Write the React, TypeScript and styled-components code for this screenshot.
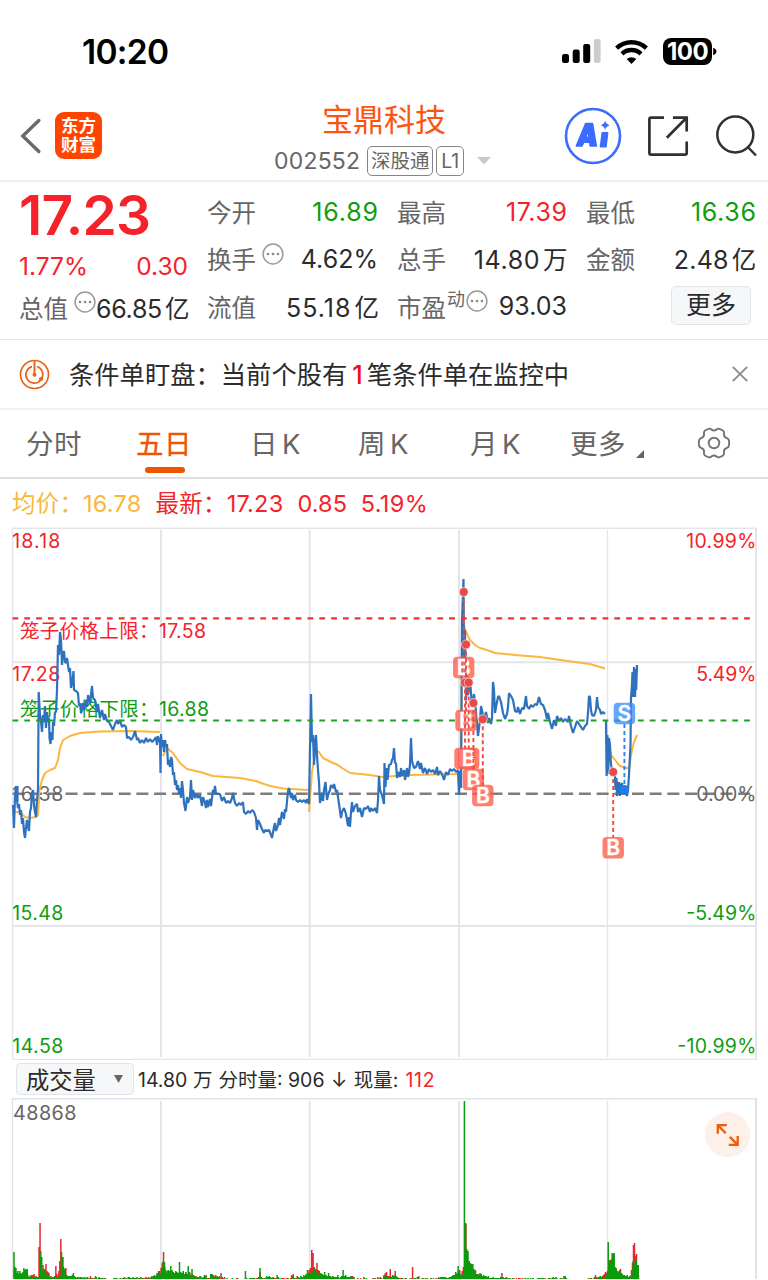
import React from "react";
import styled, { createGlobalStyle } from "styled-components";

const RED = "#f5222a";
const GREEN = "#0f9d0f";
const ORANGE = "#ee5500";
const INK = "#2b2b2b";
const GREY = "#666666";

const Global = createGlobalStyle`
  html, body { margin: 0; padding: 0; background: #fff; }
  body { width: 768px; height: 1280px; overflow: hidden; }
  * { box-sizing: border-box; }
`;

const Screen = styled.main`
  width: 768px;
  height: 1280px;
  overflow: hidden;
  display: flex;
  flex-direction: column;
  background: #fff;
  color: ${INK};
  font-family: Inter, "Noto Sans CJK SC", sans-serif;
  font-weight: 400;
  white-space: nowrap;
`;

const StatusBar = styled.header`
  height: 92px;
  flex: none;
  display: flex;
  justify-content: space-between;
  align-items: center;
  padding: 11px 51px 0 82px;
`;

const Clock = styled.span`
  font-size: 33.5px;
  font-weight: 600;
  color: #000;
  letter-spacing: -0.7px;
`;

const StatusIcons = styled.div`
  display: flex;
  align-items: center;
`;

const Battery = styled.span`
  width: 49px;
  height: 27px;
  margin-left: 15px;
  border-radius: 8px;
  background: #000;
  color: #fff;
  font-size: 24px;
  font-weight: 700;
  line-height: 27px;
  letter-spacing: -0.5px;
  text-align: center;
`;

const TitleBar = styled.div`
  height: 90px;
  flex: none;
  display: flex;
  align-items: flex-start;
  border-bottom: 2px solid #efeff1;
`;

const BackIcon = styled.svg`
  margin: 26px 0 0 20px;
  flex: none;
`;

const AppLogo = styled.div`
  width: 47px;
  height: 47px;
  margin: 20px 0 0 14px;
  border-radius: 9px;
  background: #ff4400;
  color: #fff;
  font-size: 17.5px;
  font-weight: 700;
  line-height: 19px;
  text-align: center;
  padding-top: 4px;
`;

const TitleBlock = styled.div`
  width: 218px;
  margin-left: 172px;
  display: flex;
  flex-direction: column;
`;

const StockName = styled.h1`
  margin: 6px 0 0 48px;
  font-size: 31px;
  line-height: 44px;
  font-weight: 400;
  color: #fb560f;
`;

const CodeRow = styled.div`
  display: flex;
  align-items: center;
  height: 34px;
  margin-top: 2px;
  font-size: 23px;
  letter-spacing: 0.2px;
  color: ${GREY};
`;

const Tag = styled.span<{ $w: number; $gap: number }>`
  width: ${(p) => p.$w}px;
  height: 30px;
  margin-left: ${(p) => p.$gap}px;
  border: 1.5px solid #858585;
  border-radius: 5px;
  font-size: 19.5px;
  line-height: 28px;
  letter-spacing: 0;
  text-align: center;
`;

const Caret = styled.svg`
  margin-left: 13px;
  flex: none;
`;

const HeaderIcons = styled.div`
  display: flex;
  align-items: center;
  margin: 15px 0 0 72px;
`;

const Quote = styled.section`
  height: 158px;
  flex: none;
  display: grid;
  grid-template-columns: 169px 171px 170px 170px;
  column-gap: 19px;
  padding: 6px 0 0 19px;
  border-bottom: 1.5px solid #e8e8ea;
`;

const QuoteColumn = styled.div`
  display: grid;
  grid-template-columns: 100%;
  grid-template-rows: 47px 47px 48px;
`;

const PriceColumn = styled(QuoteColumn)`
  grid-template-rows: 56px 44px 38px;
`;

const Price = styled.div`
  font-size: 55px;
  line-height: 54px;
  font-weight: 600;
  letter-spacing: -0.7px;
  color: ${RED};
`;

const Field = styled.div`
  display: flex;
  align-items: center;
  justify-content: space-between;
`;

const ChangeRow = styled.div`
  display: flex;
  align-items: center;
  justify-content: space-between;
  font-size: 24.5px;
  color: ${RED};
`;

const Label = styled.span`
  display: flex;
  align-items: center;
  font-size: 24.5px;
  color: ${GREY};
`;

const Value = styled.span<{ $color?: string; $ls?: number }>`
  font-size: 25px;
  letter-spacing: ${(p) => p.$ls ?? 0}px;
  margin-right: ${(p) => -Math.max(p.$ls ?? 0, 0)}px;
  color: ${(p) => p.$color ?? INK};
`;

const Unit = styled.span`
  font-size: 24.5px;
  letter-spacing: 0;
  margin: 0 0 0 3px;
`;

const Super = styled.sup`
  font-size: 18px;
  line-height: 18px;
  margin: -13px 0 0 1px;
  vertical-align: baseline;
`;

const DotsIcon = styled.svg<{ $gap: number }>`
  margin: -10px 0 0 ${(p) => p.$gap}px;
  flex: none;
`;

const MoreButton = styled.button`
  width: 80px;
  height: 39px;
  margin: -2px 5px 0 auto;
  padding: 0;
  border: 1.5px solid #e1e4e8;
  border-radius: 5px;
  background: #f6f7f9;
  color: ${INK};
  font: 400 25px/36px Inter, "Noto Sans CJK SC", sans-serif;
`;

const Notice = styled.section`
  height: 70px;
  flex: none;
  display: flex;
  align-items: center;
  padding: 0 19px 0 19px;
  border-bottom: 2px solid #f0f0f2;
`;

const NoticeText = styled.p`
  flex: 1;
  margin: -2px 0 0 19px;
  font-size: 25.3px;
  b {
    color: #ee1111;
    font-weight: 500;
    margin: 0 4px 0 5px;
  }
`;

const Tabs = styled.nav`
  height: 69px;
  flex: none;
  display: grid;
  grid-template-columns: 110px 114px 108px 112px 100px 127px 34px;
  align-items: center;
  padding: 0 0 0 26px;
  border-bottom: 2px solid #dedee0;
`;

const Tab = styled.span<{ $active?: boolean }>`
  position: relative;
  width: max-content;
  font-size: 27.5px;
  line-height: 67px;
  padding-top: 1px;
  letter-spacing: 0.4px;
  word-spacing: -4px;
  color: ${(p) => (p.$active ? ORANGE : GREY)};
  -webkit-text-stroke: ${(p) => (p.$active ? 0.3 : 0)}px ${ORANGE};
  &::after {
    content: "";
    display: ${(p) => (p.$active ? "block" : "none")};
    position: absolute;
    left: 9px;
    bottom: 5px;
    width: 40px;
    height: 6px;
    border-radius: 3px;
    background: ${ORANGE};
  }
`;

const TabCorner = styled.svg`
  margin: 0 0 -4px 10px;
`;

const GearIcon = styled.svg`
  margin-top: -2px;
`;

const Legend = styled.div`
  height: 48px;
  flex: none;
  display: flex;
  align-items: baseline;
  padding: 7px 0 0 12px;
  line-height: 36px;
  font-size: 23.5px;
`;

const LegendItem = styled.span<{ $color: string; $gap: number; $ls?: number }>`
  color: ${(p) => p.$color};
  margin-right: ${(p) => p.$gap}px;
  letter-spacing: ${(p) => p.$ls ?? 0}px;
`;

const Plot = styled.svg`
  display: block;
  flex: none;
`;

const VolumeBar = styled.div`
  height: 38px;
  flex: none;
  display: flex;
  align-items: center;
  padding-left: 16px;
  font-size: 19.5px;
`;

const Select = styled.div`
  width: 118px;
  height: 32px;
  display: flex;
  align-items: center;
  justify-content: space-between;
  padding: 0 10px 0 9px;
  border: 1.5px solid #e1e4e8;
  border-radius: 4px;
  background: #f6f7f9;
  font-size: 23.3px;
`;

const VolumeInfo = styled.div`
  display: flex;
  align-items: baseline;
  margin: -2px 0 0 4px;
`;

const VolumeText = styled.span<{ $gap: number; $color?: string; $ls?: number }>`
  margin-left: ${(p) => p.$gap}px;
  letter-spacing: ${(p) => p.$ls ?? 0}px;
  color: ${(p) => p.$color ?? INK};
`;

function Dots({ gap }: { gap: number }) {
  return (
    <DotsIcon $gap={gap} width="22" height="22" viewBox="0 0 22 22">
      <circle cx="11" cy="11" r="9.9" fill="none" stroke="#999" strokeWidth="1.5" />
      <g fill="#888">
        <circle cx="6" cy="11" r="1.35" />
        <circle cx="11" cy="11" r="1.35" />
        <circle cx="16" cy="11" r="1.35" />
      </g>
    </DotsIcon>
  );
}

const priceDays = [
  "13,805 14,828 15,796 16,786 17,800 18,808 19,804 20,815 21,810 22,824 23,818 24,832 25,838 26,828 27,820 28,826 29,831 30,812 31,808 32,793 33,790 34,805 35,812 36,817 37,800 38,790 38.7,692 40,715 41,722 42,732 43,715 44,722 45,706 46,728 47,712 48,722 49,718 49.5,738 50.5,744 51.5,732 52.5,740 53,722 54,726 55,712 56,712 57,690 58,645 59,655 60,632 61,640 62,665 63,653 64,651 65,662 66,663 67,658 69,672 70,668 71,688 72.5,680 73.5,671 74,690 76,691 78,693 79,706 80,703 81,713 83,703 84,710 86,700 87,707 88,695 90,703 92,686 93,698 95,700 97,712 98,704 100,718 102,710 104,720 105,714 107,721 109,722 111,726 113,730 115,724 117,720 118,724 120,720 122,727 124,725 126,727 127,738 129,737 131,740 133,737 135,731 137,740 138,738 140,743 142,740 144,743 146,738 148,742 150,739 152,742 154,740 156,737 157,745 158,736 159,742 160,738 160.5,773 161,734 162,747 163,740 164,752 165,740 166,747 167,744 168,765 169,760 170,767 171,757 172,760 173,775 174,772 175,785 176,780 177,790 178,785 179,794 180,788 181,798 182,781 183,790 184,803 185.5,811 187,797 188,803 190,797 191,780 192,800 193,790 195,798 197,794 198,798 200,795 202,806 203,797 205,803 206,808 207,800 208,807 210,799 211,806 213,790 214,793 215,786 216,794 218,794 220,794 222,801 224,797 226,803 228,801 230,803 232,798 233,793 235,803 237,806 239,803 241,805 243,802 244,812 246,814 248,811 250,813 252,810 254,812 256,818 257,830 258,820 260,824 262,829 264,833 265,830 267,831 269,830 271,835 272,838 274,827 275,823 276,831 278,825 279,818 280,825 282,812 284,819 285,809 286,812 288,791 289,788 291,798 292,793 293,800 295,795 296,800 298,802 300,800 302,802 304,800 306,803 307,799 309,804 311,694 312,742 313,735 314,765 315,743 316,735 317,755 318,770 319,782 320,803 321,797 322,793 323,801 324,790 325.5,782 327,800 328,795 330,790 331,785 333,788 334,784 336,792 337,790 339,804 341,818 342,812 344,808 346,814 348,826 349,817 350,827 351,812 352,802 353,812 355,806 357,804 358,812 360,808 362,817 364,808 366,809 368,806 370,812 371,808 373,811 375,808 377,813 378,800 379,776 380,790 382,795 384,804 384.5,763 385.5,787 386.5,768 387.5,780 389,765 391,764 392,760 393,758 394,748 395,763 396,763 397,778 398,772 400,777 401,768 402,776 404,770 405,780 407,768 408,777 409,773 410,765 411,738 412,761 414,768 416,767 418,761 420,769 421,763 423,773 425,768 427,774 429,769 431,772 433,770 435,774 437,767 438,775 440,771 442,774 444,780 446,772 448,775 450,769 452,771 454,769 456,772 458,770 459,795 460,771 461,788 462,620 463.5,579 464,660 465,630 466,700 467,670 468,695 470,680 472,706 474,694 476,712 478,736 480,720 481,706 483,715 484,720 486,712 488,723 489,718 491,724 492,718 493,682 494,690 495,713 496,707 498,697 499,696 501,702 503,713 505,719 507,714 508,707 509,693 511,696 513,700 515,711 517,712 518,707 520,714 522,708 524,709 526,696 527,706 529,709 531,705 533,707 535,704 537,705 539,697 541,704 543,705 545,710 547,719 548,713 550,722 552,729 554,720 556,726 557,716 559,721 561,718 563,722 565,719 568,722 569,716 571,726 573,733 575,727 577,721 579,724 581,727 583,730 585,726 587,724 588,713 589,696 590,697 591,710 592,715 594,716 596,710 597,697 598,707 600,710 601,714 603,712 605,714",
  "606,720 606.6,776 607.4,735 608.2,774 609,738 610,745 611,765 613,772 615,774 615.5,790 616.5,778 617,796 618,788 619,782 620,796 621,785 622,783 623,794 625,790 627,796 628,790 629,775 630.5,745 631,698 632,684 632.5,672 633.2,697 634,667 635,697 636,669 636.2,690 637,665",
];

const averageDays = [
  "13,812 20,812 25,817 30,818 36,817 38,815 39.5,790 42,780 45,773 50,770 55,768 58,760 60,748 63,740 70,736 80,733 100,731.5 130,731 160,732",
  "163,756 167,748 173,753 180,763 187,769 200,772 213,776 240,778 256,781 261,783 270,786 283,788.5 308,790",
  "309,812 312,772 316,750 319,752 323,758 333,763 338,765 342,768 350,773 370,775 382,777 395,776 410,775 458,774",
  "461,780 462,640 463,622 466,632 470,640 475,645 480,648 490,651 495,653 515,655 540,657 560,660 575,662 590,664 600,667 605,668.5",
  "607,740 611,755 615,760 620,766 626,768 629,768 632,750 634,742 637,735",
];

const buys = [
  { x: 463.7, dot: 592, box: 667.5 },
  { x: 466, dot: 644.5, box: 720.5 },
  { x: 465, dot: 682.5, box: 758.5 },
  { x: 468.7, dot: 682.5, box: 758.5 },
  { x: 473.4, dot: 703, box: 779.5 },
  { x: 482.8, dot: 719.3, box: 795.5 },
  { x: 613.2, dot: 772, box: 847.8 },
];

function Marker({ x, y, letter, color }: { x: number; y: number; letter: string; color: string }) {
  return (
    <g>
      <rect x={x - 10.7} y={y - 10.7} width="21.4" height="21.4" rx="4" fill={color} fillOpacity="0.78" />
      <text
        x={x}
        y={y + 7.4}
        fill="#fff"
        stroke="#fff"
        strokeWidth="0.3"
        fontSize="21"
        fontWeight="600"
        textAnchor="middle"
      >
        {letter}
      </text>
    </g>
  );
}

const axisLabels: [string, number, number, string, boolean][] = [
  ["18.18", 547.9, 48, RED, false],
  ["17.28", 680.5, 48, RED, false],
  ["16.38", 800.7, 51, GREY, false],
  ["15.48", 920, 51, GREEN, false],
  ["14.58", 1052.5, 51, GREEN, false],
  ["10.99%", 547.9, 70, RED, true],
  ["5.49%", 680.5, 60, RED, true],
  ["0.00%", 800.7, 60, GREY, true],
  ["-5.49%", 920, 70, GREEN, true],
  ["-10.99%", 1052.5, 79, GREEN, true],
];

function PriceChart() {
  return (
    <Plot width="768" height="533" viewBox="0 527 768 533" fontFamily='Inter, "Noto Sans CJK SC", sans-serif'>
      <g fill="none" stroke="#e4e5ea" strokeWidth="2">
        <path d="M161 530V1057M309.7 530V1057M459 530V1057" />
        <path d="M607.5 530V1057" strokeWidth="1.3" />
        <path d="M12.5 662.3H756M12.5 926H756" />
        <path d="M12.5 1059.5V528.3H756" strokeWidth="1.4" />
        <path d="M12.5 1059.4H756" strokeWidth="1.4" />
        <path d="M756 528V1060" />
      </g>
      <path d="M12.5 793.8H756" stroke="#7d7d7d" strokeWidth="2.4" strokeDasharray="12 5.7" />
      <g fontSize="19.5">
        {axisLabels.map(([text, y, w, color, right]) => (
          <text key={text} x={right ? 756.3 - w : 12.3} y={y} fill={color} textLength={w}>
            {text}
          </text>
        ))}
        <text x="20" y="637.5" fill={RED} textLength="186">笼子价格上限：17.58</text>
        <text x="20" y="716" fill={GREEN} textLength="189">笼子价格下限：16.88</text>
      </g>
      <g fill="none" stroke="#fbb63f" strokeWidth="2" strokeLinejoin="round">
        {averageDays.map((points) => (
          <polyline key={points} points={points} />
        ))}
      </g>
      <g fill="none" stroke="#2e71bd" strokeWidth="2.2" strokeLinejoin="bevel">
        {priceDays.map((points) => (
          <polyline key={points} points={points} />
        ))}
      </g>
      <path d="M12.5 618.3H754" stroke="#ee3338" strokeWidth="2.2" strokeDasharray="5.8 6" />
      <path d="M12.5 720.5H754" stroke="#1fa01f" strokeWidth="2.2" strokeDasharray="5.8 6" />
      {buys.map(({ x, dot, box }) => (
        <g key={`${x}-${box}`}>
          <path d={`M${x} ${dot}V${box - 10}`} stroke="#f2483c" strokeWidth="1.9" strokeDasharray="4 3" />
          <Marker x={x} y={box} letter="B" color="#ff5a48" />
          <circle cx={x} cy={dot} r="4.5" fill="#e84a48" stroke="#ffffff" strokeOpacity="0.6" strokeWidth="1" />
        </g>
      ))}
      <path d="M624.4 724V790" stroke="#2b82f5" strokeWidth="1.9" strokeDasharray="4 3" />
      <Marker x={624.4} y={713.5} letter="S" color="#3a8df6" />
      <circle cx="624.4" cy="789.7" r="4.7" fill="#1d7cf2" />
    </Plot>
  );
}

// Bar heights listed left to right; each run starts at x and advances by step.
const volumeRuns: { x: number; step: number; up: string; down: string }[] = [
  {
    x: 14,
    step: 0.99,
    down: "27 12 11 6 8 5 8 6 5 7 11 9 10 9 4 2 3 2 2 2 3 1 2 2 1 2 3 28 22 8 7 10 6 3 6 3 2 2 1 2 2 3 1 1 2 2 1 3 27 22 12 10 6 3 2 3 3 3 2 4 6 3 2 1 2 2 1 2 2 1 1 2 1 1 2 0 1 0 1 0 0 1 1 2 0 1",
    up: "8 5 2 3 4 3 2 3 3 4 2 5 3 10 2 1 2 4 4 4 5 2 3 2 2 32 56 10 6 14 10 9 15 8 7 6 2 3 1 1 2 3 13 5 3 8 18 40 20 22 8 6 11 4 3 2 2 1 3 3 2 2 1 1 1 2 1 1 2 0 1 2 1 0 2 0 1 3 0 1 0 1 3",
  },
  {
    x: 99,
    step: 1.25,
    down: "2 1 1 1 0 1 0 0 0 0 0 0 1 1 1 0 0 1 0",
    up: "0 1 0 0 1 0 0 0 0 0 0 0 0 0 1 0 0 1 0",
  },
  {
    x: 122,
    step: 1.25,
    down: "0 1 2 1 0 2 2 1 1 2 1 1 2 0 1 2 1 0 0 1 0 1 1 0 3 2 4 3 6 5 8 6 12 18 17 9 6 9 8 13 9 7 6 8 7 6 17 7 6 8 5 7 5 13 7 4 10 4 3 2 2 2 1 3 1 2 4 3 1 0 1 5 5 4 2 4 1 1 3 0 1",
    up: "1 0 0 1 0 1 1 0 0 1 0 1 0 1 1 0 1 1 1 2 1 2 1 2 2 3 3 2 4 8 5 11 16 27 12 5 8 5 7 4 3 6 4 5 5 4 7 4 5 3 5 6 4 5 6 3 5 4 2 3 1 1 3 1 1 2 1 4 1 1 1 3 2 1 3 2 3 2 1 6 2",
  },
  {
    x: 223,
    step: 1.32,
    down: "0 0 0 1 0 0 0 1 0 0 0 1 0 0 0 0 0 8 1 0 0 1 1 0 1 0 0 2 11 2 1 0 1 3 2 3 2 1 2 0 1 4 2 0 1 0 0 0 0 1 0 0 4 2 1 1 0 2 1 3 2 1 3 5 9 6 5 4 8 11 8 7 4 8 6 5 4 7 4 3 6 3 2 3 2 2 2 4 1 2 3 9 3 4 1 2 2 3 1 2",
    up: "1 2 0 0 0 0 0 0 0 0 1 0 0 0 0 0 0 0 0 0 1 0 0 1 0 1 1 0 7 0 0 1 1 2 0 1 0 0 2 1 1 0 1 0 0 1 1 0 1 1 0 1 3 5 1 1 3 2 1 2 1 4 2 5 5 9 11 29 26 12 10 16 9 5 4 5 4 3 3 3 2 3 1 3 2 1 2 2 1 2 3 2 1 2 2 1 2 3 3 2",
  },
  {
    x: 354,
    step: 1.24,
    down: "0 0 0 1 0 0 0 0 2 0 1 0 0 0 0 0 1 0 0 1 0 1 0 0 3 2 3 1 2 1 2 3 1 4 3 1 1 0 0 1 0 0 1 0 0 0 1 0 0 1 0 2 1 0 0 1 0 0 1 0 0 0 1 0 1 0 0 0 1 1 2 2 2 1 2 1 1 2 2 3 4 4 7 5 13 7 5 4 3",
    up: "0 0 0 0 0 1 0 0 1 0 0 0 0 0 0 1 0 1 0 2 0 2 1 0 4 6 7 3 3 10 2 4 3 8 2 2 1 1 1 1 0 1 1 0 0 1 0 12 1 1 0 1 3 0 0 0 1 0 0 1 0 0 1 0 0 0 1 0 2 1 1 2 0 2 1 1 1 2 2 3 2 3 5 6 8 9 4 8 12",
  },
  {
    x: 464.4,
    step: 1.2,
    down: "178 56 30 28 18 16 15 15 10 8 5 5 4 6 5 3 4 3 3 2 3 1 1 1 2 1 1 1 1 1 1 0 1 1 1 2 1 0 1 0 1 0 0 0 0 0 0 0 0 0 1 1 0 1 0 1 0 1 0 0 0 1 1 1 0 1 1 0 0 0 1 1 0 1 2 1 0 1 0 0 1 0 0 3 3 1 0 0 0",
    up: "55 55 28 15 14 8 13 8 6 9 3 2 5 3 2 2 3 2 1 2 1 0 1 1 1 0 1 0 0 0 2 6 2 0 1 0 0 1 0 0 0 1 0 1 0 1 1 0 1 0 0 0 0 0 0 0 0 1 0 0 0 0 1 0 1 0 0 1 0 0 0 1 0 1 0 0 2 0 0 0 0 1",
  },
  {
    x: 588.2,
    step: 1,
    down: "0 0 1 0 0 0 1 1 0 0 2 2 3 2 1 1 0 1 4 6 37 19 17 12 26 25 26 12 11 8 7 7 8 5 5 4 3 2 3 4 2 1 2 4 7 18 15 18 19 14 14",
    up: "1 0 0 1 0 0 2 4 2 1 1 1 0 2 3 4 5 7 6 8 10 13 19 20 12 10 9 11 6 8 5 9 10 6 4 3 4 3 2 2 1 3 2 9 16 34 36 23 25 8 4",
  },
];

function VolumeBars({ values, x, step, color }: { values: string; x: number; step: number; color: string }) {
  const d = values
    .split(" ")
    .map((h, i) => (h === "0" ? "" : `M${(x + i * step).toFixed(2)} 1279v-${h}`))
    .join("");
  return <path d={d} stroke={color} strokeWidth="1.5" fill="none" />;
}

function VolumeChart() {
  return (
    <Plot width="768" height="182" viewBox="0 1098 768 182" fontFamily="Inter, sans-serif">
      <g fill="none" stroke="#e0e2e7" strokeWidth="2">
        <path d="M12 1098.5H757M756 1098V1279" />
        <path d="M161 1101V1279M309.7 1101V1279M459 1101V1279" stroke="#e4e5ea" />
        <path d="M607.5 1101V1279" stroke="#e4e5ea" strokeWidth="1.3" />
        <path d="M12.5 1098V1279" strokeWidth="1.4" />
      </g>
      <text x="13" y="1120" fontSize="19.8" fill={GREY} textLength="63.5">48868</text>
      {volumeRuns.map((run) => (
        <g key={run.x}>
          <VolumeBars values={run.up} x={run.x + 0.3} step={run.step} color="#e8262b" />
          <VolumeBars values={run.down} x={run.x} step={run.step} color="#0a9a0a" />
        </g>
      ))}
      <circle cx="727.7" cy="1134.7" r="22.6" fill="#fdf0e8" />
      <g fill="none" stroke="#f05a0a" strokeWidth="2.3">
        <path d="M717.8 1133.8V1125.2H726.8M718.5 1125.9L725.8 1133.2" />
        <path d="M737.7 1136V1144.8H728.8M737 1144.1L729.8 1136.9" />
      </g>
    </Plot>
  );
}

export default function App() {
  return (
    <Screen>
      <Global />
      <StatusBar>
        <Clock>10:20</Clock>
        <StatusIcons>
          <svg width="39" height="25" viewBox="0 0 39 25">
            <rect x="0" y="15" width="7" height="9" rx="2.2" />
            <rect x="10.7" y="10.5" width="7" height="13.5" rx="2.2" />
            <rect x="21.2" y="5" width="7" height="19" rx="2.2" />
            <rect x="31.8" y="0" width="6.8" height="24" rx="2.2" fill="#cccccc" />
          </svg>
          <svg width="33" height="24" viewBox="0 0 33 24" style={{ marginLeft: 14 }}>
            <g fill="none" stroke="#000" strokeWidth="4.4">
              <path d="M1.6 8.2a21.5 21.5 0 0 1 29.8 0" />
              <path d="M7 13.9a13.7 13.7 0 0 1 19 0" />
            </g>
            <path d="M16.5 24l-4.8-4.9a7 7 0 0 1 9.6 0z" />
          </svg>
          <Battery>100</Battery>
          <svg width="5" height="9" viewBox="0 0 5 9">
            <path d="M1.2 0.8Q4.4 2 4.4 4.5T1.2 8.2z" />
          </svg>
        </StatusIcons>
      </StatusBar>

      <TitleBar>
        <BackIcon width="21" height="36" viewBox="0 0 21 36">
          <path d="M18.8 2.5L2.8 18L18.8 33.5" fill="none" stroke="#6a6a6a" strokeWidth="3.4" strokeLinecap="round" />
        </BackIcon>
        <AppLogo>东方<br />财富</AppLogo>
        <TitleBlock>
          <StockName>宝鼎科技</StockName>
          <CodeRow>
            002552
            <Tag $w={66} $gap={7}>深股通</Tag>
            <Tag $w={28} $gap={3}>L1</Tag>
            <Caret width="14" height="8" viewBox="0 0 14 8"><path d="M0 0H14L7 7.5z" fill="#c9c9c9" /></Caret>
          </CodeRow>
        </TitleBlock>
        <HeaderIcons>
          <svg width="58" height="58" viewBox="564 107 58 58">
            <circle cx="593" cy="136" r="27" fill="none" stroke="#3b6bff" strokeWidth="2.6" />
            <g fill="#3b6bff" stroke="#3b6bff" strokeWidth="1.6" strokeLinejoin="round">
              <path fillRule="evenodd" d="M585.7 123.5H592.5L596.3 146H590.2L589.6 142.2H583.8L582 146H576.3zM588.2 130.5L585.6 137.4H589.1z" />
              <path d="M602.3 132.8H607.6L605.9 146.8H600.5z" />
            </g>
            <path d="M605.2 120.8Q606.1 124.2 609.7 125.2Q606.1 126.2 605.2 129.8Q604.3 126.2 600.7 125.2Q604.3 124.2 605.2 120.8z" fill="#3b6bff" />
          </svg>
          <svg width="44" height="44" viewBox="646 114 44 44" style={{ marginLeft: 24 }}>
            <g fill="none" stroke="#303030" strokeWidth="2.7">
              <path d="M664 117.6H651Q649.4 117.6 649.4 119.2V153Q649.4 154.7 651 154.7H685Q686.7 154.7 686.7 153V141.5" />
              <path d="M673 117.6H686.7V131.5M686.3 118L666.8 137.8" />
            </g>
          </svg>
          <svg width="44" height="44" viewBox="714 114 44 44" style={{ marginLeft: 24 }}>
            <g fill="none" stroke="#303030" strokeWidth="2.5">
              <circle cx="735.3" cy="134.5" r="18" />
              <path d="M747.8 147L756 155.5" />
            </g>
          </svg>
        </HeaderIcons>
      </TitleBar>

      <Quote>
        <PriceColumn>
          <Price>17.23</Price>
          <ChangeRow><span>1.77%</span><span>0.30</span></ChangeRow>
          <Field><Label>总值<Dots gap={6} /></Label><Value $ls={-0.3}>66.85<Unit>亿</Unit></Value></Field>
        </PriceColumn>
        <QuoteColumn>
          <Field><Label>今开</Label><Value $ls={0.8} $color={GREEN}>16.89</Value></Field>
          <Field><Label>换手<Dots gap={6} /></Label><Value>4.62%</Value></Field>
          <Field><Label>流值</Label><Value $ls={1}>55.18<Unit>亿</Unit></Value></Field>
        </QuoteColumn>
        <QuoteColumn>
          <Field><Label>最高</Label><Value $ls={0.6} $color={RED}>17.39</Value></Field>
          <Field><Label>总手</Label><Value $ls={0.6}>14.80<Unit>万</Unit></Value></Field>
          <Field><Label>市盈<Super>动</Super><Dots gap={1} /></Label><Value>93.03</Value></Field>
        </QuoteColumn>
        <QuoteColumn>
          <Field><Label>最低</Label><Value $ls={0.7} $color={GREEN}>16.36</Value></Field>
          <Field><Label>金额</Label><Value $ls={0.2}>2.48<Unit>亿</Unit></Value></Field>
          <Field><MoreButton>更多</MoreButton></Field>
        </QuoteColumn>
      </Quote>

      <Notice>
        <svg width="31" height="31" viewBox="0 0 31 31">
          <g fill="none" stroke="#ec6418" strokeWidth="1.7">
            <circle cx="15.5" cy="15.5" r="14" />
            <path d="M13 7.6A8.4 8.4 0 1 0 21.8 21M18 7.5A8.4 8.4 0 0 1 22.8 19.5" />
            <path d="M15.5 1.5V15.5" strokeWidth="2" />
          </g>
          <circle cx="15.5" cy="15.8" r="2" fill="#ec6418" />
          <circle cx="22" cy="20" r="2.1" fill="#ec6418" />
        </svg>
        <NoticeText>条件单盯盘：当前个股有<b>1</b>笔条件单在监控中</NoticeText>
        <svg width="18" height="18" viewBox="0 0 18 18">
          <path d="M1.8 1.8L16.2 16.2M16.2 1.8L1.8 16.2" stroke="#8d8d8d" strokeWidth="1.9" />
        </svg>
      </Notice>

      <Tabs>
        <Tab>分时</Tab>
        <Tab $active>五日</Tab>
        <Tab>日 K</Tab>
        <Tab>周 K</Tab>
        <Tab>月 K</Tab>
        <Tab>更多<TabCorner width="8" height="8" viewBox="0 0 8 8"><path d="M8 0V8H0z" fill="#666" /></TabCorner></Tab>
        <GearIcon width="34" height="34" viewBox="-17 -17 34 34">
          <path d="M-5.5 -14.2Q-3.6 -14.8 -2.6 -13.4Q0 -11.4 2.6 -13.4Q3.6 -14.8 5.5 -14.2Q8.3 -13.2 9.6 -11.8Q10.5 -10.6 9.9 -9Q9.8 -5.9 12.9 -4.9Q14.8 -4.2 15 -2.4Q15.4 0 15 2.4Q14.8 4.2 12.9 4.9Q9.8 5.9 9.9 9Q10.5 10.6 9.6 11.8Q8.3 13.2 5.5 14.2Q3.6 14.8 2.6 13.4Q0 11.4 -2.6 13.4Q-3.6 14.8 -5.5 14.2Q-8.3 13.2 -9.6 11.8Q-10.5 10.6 -9.9 9Q-9.8 5.9 -12.9 4.9Q-14.8 4.2 -15 2.4Q-15.4 0 -15 -2.4Q-14.8 -4.2 -12.9 -4.9Q-9.8 -5.9 -9.9 -9Q-10.5 -10.6 -9.6 -11.8Q-8.3 -13.2 -5.5 -14.2z" fill="none" stroke="#747474" strokeWidth="1.9" />
          <circle r="5.3" fill="none" stroke="#747474" strokeWidth="1.9" />
        </GearIcon>
      </Tabs>

      <Legend>
        <LegendItem $color="#f9b83c" $gap={14} $ls={0.2}>均价：16.78</LegendItem>
        <LegendItem $color={RED} $gap={14} $ls={0.25}>最新：17.23</LegendItem>
        <LegendItem $color={RED} $gap={13.5} $ls={0.1}>0.85</LegendItem>
        <LegendItem $color={RED} $gap={0} $ls={0.4}>5.19%</LegendItem>
      </Legend>

      <PriceChart />

      <VolumeBar>
        <Select>
          成交量
          <svg width="9" height="8" viewBox="0 0 9 8"><path d="M0 0H9L4.5 8z" fill="#666" /></svg>
        </Select>
        <VolumeInfo>
          <VolumeText $gap={0}>14.80 万</VolumeText>
          <VolumeText $gap={6}>分时量: 906</VolumeText>
          <VolumeText $gap={6.5}>↓</VolumeText>
          <VolumeText $gap={6.5}>现量:</VolumeText>
          <VolumeText $gap={7} $color={RED} $ls={0.8}>112</VolumeText>
        </VolumeInfo>
      </VolumeBar>

      <VolumeChart />
    </Screen>
  );
}
